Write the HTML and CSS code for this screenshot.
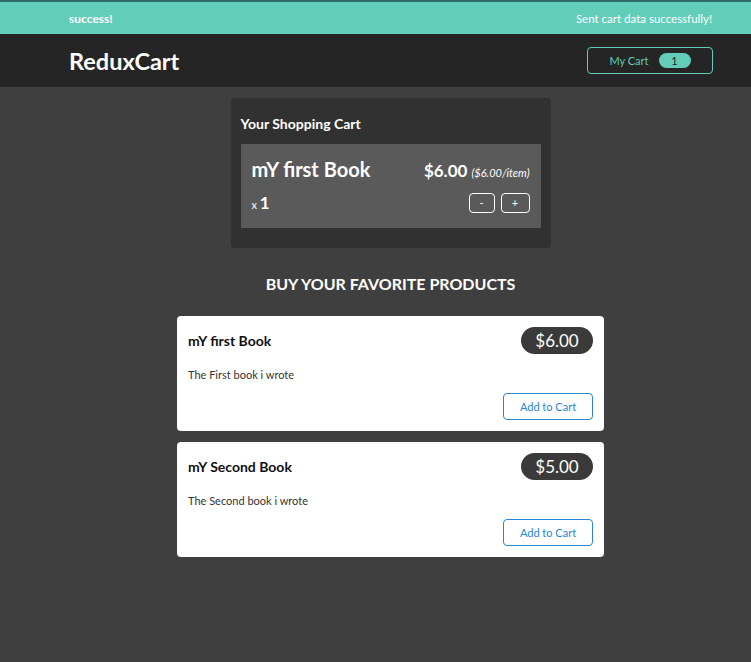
FILE: index.html
```html
<!DOCTYPE html>
<html>
<head>
<meta charset="utf-8">
<link rel="stylesheet" href="styles.css">
</head>
<body>
<div class="topline"></div>
<section class="notification">
  <h2>success!</h2>
  <p>Sent cart data successfully!</p>
</section>
<header class="header">
  <h1>ReduxCart</h1>
  <button class="cart-button">
    <span>My Cart</span>
    <span class="badge">1</span>
  </button>
</header>
<main class="main">
  <section class="cart">
    <h2>Your Shopping Cart</h2>
    <div class="item">
      <div class="item-top">
        <h3>mY first Book</h3>
        <div class="item-price">$6.00 <span>($6.00/item)</span></div>
      </div>
      <div class="item-bottom">
        <div class="qty">x <span>1</span></div>
        <div class="actions">
          <button class="minus">-</button>
          <button class="plus">+</button>
        </div>
      </div>
    </div>
  </section>
  <section class="products">
    <h2>Buy your favorite products</h2>
    <ul>
      <li class="card">
        <div class="card-top">
          <h3>mY first Book</h3>
          <div class="price">$6.00</div>
        </div>
        <p>The First book i wrote</p>
        <div class="card-actions"><button>Add to Cart</button></div>
      </li>
      <li class="card">
        <div class="card-top">
          <h3>mY Second Book</h3>
          <div class="price">$5.00</div>
        </div>
        <p>The Second book i wrote</p>
        <div class="card-actions"><button>Add to Cart</button></div>
      </li>
    </ul>
  </section>
</main>
</body>
</html>
```
FILE: styles.css
```css
* { box-sizing: border-box; }
html, body { margin: 0; padding: 0; }
body {
  background: #3f3f3f;
  font-family: Lato, "Open Sans", sans-serif;
  min-height: 662px;
}
.topline { height: 2px; background: #2e6a6a; }
.notification {
  height: 32px;
  background: #62cdb9;
  display: flex;
  align-items: center;
  justify-content: space-between;
  padding: 0 39px 0 69px;
  color: #fff;
}
.notification h2 { margin: 0; font-size: 12px; font-weight: 700; }
.notification p { margin: 0; font-size: 11.5px; }
.header {
  height: 53px;
  background: #252525;
  display: flex;
  align-items: center;
  justify-content: space-between;
  padding: 0 38px 0 69px;
}
.header h1 { margin: 0; color: #fff; font-size: 23.5px; font-weight: 700; }
.cart-button {
  width: 126px;
  height: 27px;
  border: 1px solid #62cdb9;
  border-radius: 4px;
  background: transparent;
  color: #62cdb9;
  font-family: inherit;
  font-size: 11px;
  display: flex;
  align-items: center;
  justify-content: center;
  gap: 10px;
  padding: 0;
}
.badge {
  background: #62cdb9;
  color: #252525;
  border-radius: 10px;
  width: 32px;
  height: 15px;
  display: flex;
  align-items: center;
  justify-content: center;
  font-size: 11px;
}
.main {
  padding: 11px 0 0 30px;
  display: flex;
  flex-direction: column;
  align-items: center;
}
.cart {
  width: 320px;
  background: #313131;
  border-radius: 4px;
  padding: 16px 10px 20px;
}
.cart h2 { margin: 0 0 10px; color: #fff; font-size: 14px; font-weight: 700; line-height: 20px; }
.item {
  background: #5a5a5a;
  padding: 12px 11px 15px;
  color: #fff;
}
.item-top { display: flex; justify-content: space-between; align-items: baseline; }
.item-top h3 { margin: 0; font-size: 20px; font-weight: 700; line-height: 26px; }
.item-price { font-size: 17px; font-weight: 700; }
.item-price span { font-size: 11px; font-weight: 400; font-style: italic; }
.item-bottom { display: flex; justify-content: space-between; align-items: center; margin-top: 10px; }
.qty { font-size: 11px; }
.qty span { font-size: 17px; font-weight: 700; }
.actions { display: flex; gap: 6px; }
.actions button {
  height: 20px;
  background: transparent;
  border: 1px solid #fff;
  border-radius: 4px;
  color: #fff;
  font-family: inherit;
  font-size: 11px;
  padding: 0;
}
.minus { width: 26px; }
.plus { width: 29px; }
.products { width: 427px; margin-top: 24px; }
.products h2 {
  margin: 0 0 20px;
  text-align: center;
  color: #fff;
  text-transform: uppercase;
  font-size: 16px;
  font-weight: 700;
  line-height: 24px;
}
.products ul { list-style: none; margin: 0; padding: 0; display: flex; flex-direction: column; gap: 11px; }
.card {
  background: #fff;
  border-radius: 4px;
  height: 115px;
  padding: 11px 11px 10px;
}
.card-top { display: flex; justify-content: space-between; align-items: center; }
.card-top h3 { margin: 0; font-size: 14px; font-weight: 700; color: #111; }
.price {
  background: #3a3a3a;
  color: #fff;
  border-radius: 14px;
  width: 72px;
  height: 27px;
  display: flex;
  align-items: center;
  justify-content: center;
  font-size: 17px;
}
.card p { margin: 14px 0 11px; font-size: 11px; color: #333; line-height: 14px; }
.card-actions { display: flex; justify-content: flex-end; }
.card-actions button {
  width: 90px;
  height: 27px;
  border: 1px solid #2a84d8;
  border-radius: 4px;
  background: #fff;
  color: #2a84d8;
  font-family: inherit;
  font-size: 11px;
}
```
